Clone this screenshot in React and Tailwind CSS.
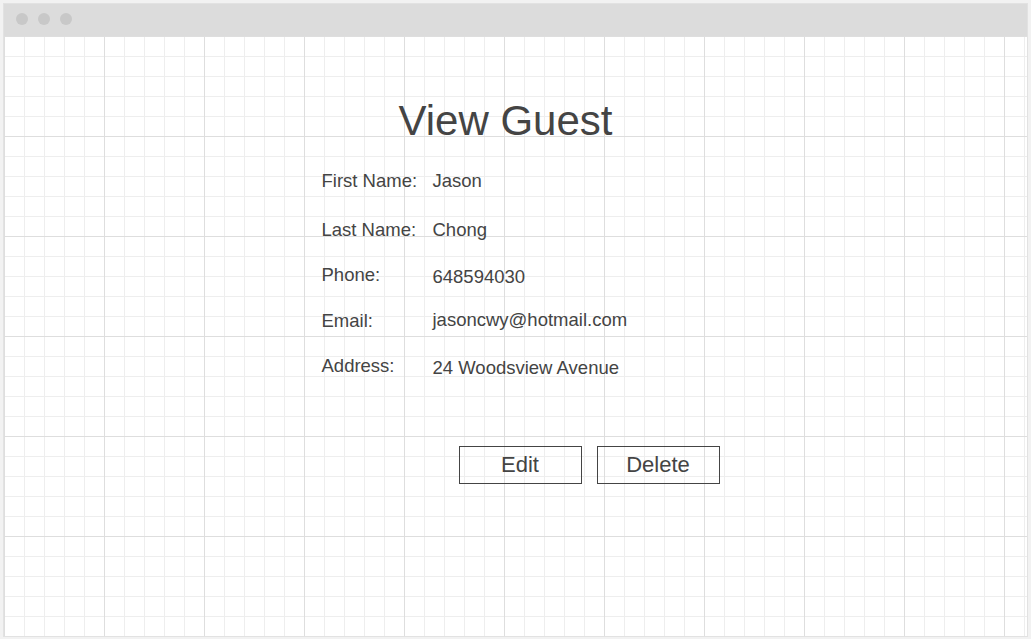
import React from 'react';

const guest = [
  { label: 'First Name:', value: 'Jason', mt: 'mt-[25px]', vt: 'mt-0' },
  { label: 'Last Name:', value: 'Chong', mt: 'mt-[28px]', vt: 'mt-0' },
  { label: 'Phone:', value: '648594030', mt: 'mt-[24px]', vt: 'mt-[2px]' },
  { label: 'Email:', value: 'jasoncwy@hotmail.com', mt: 'mt-[23px]', vt: '-mt-[1px]' },
  { label: 'Address:', value: '24 Woodsview Avenue', mt: 'mt-[24px]', vt: 'mt-[2px]' },
];

const App = () => {
  return (
    <div className="w-[1031px] h-[639px] bg-[#f2f2f2] pt-[3px] pl-[3px] font-['Liberation_Sans',Arial,sans-serif] text-[#444444]">
      <div className="w-[1025px] h-[634px] border border-[#e2e2e2] bg-white flex flex-col">
        <div className="h-[32px] bg-[#dcdcdc] flex items-start gap-[10px] pl-[12px] pt-[9px]">
          <span className="w-[12px] h-[12px] rounded-full bg-[#c8c8c8]"></span>
          <span className="w-[12px] h-[12px] rounded-full bg-[#c8c8c8]"></span>
          <span className="w-[12px] h-[12px] rounded-full bg-[#c8c8c8]"></span>
        </div>

        <div className="flex-1 bg-white bg-[linear-gradient(to_right,#dedede_1px,transparent_1px),linear-gradient(to_bottom,#dedede_1px,transparent_1px),linear-gradient(to_right,#eeeeee_1px,transparent_1px),linear-gradient(to_bottom,#eeeeee_1px,transparent_1px)] bg-[size:100px_100px,100px_100px,20px_20px,20px_20px]">
          <div className="w-[388px] mx-auto pt-[61px]">
            <h1 className="w-[368px] text-center text-[42px] leading-[48px] font-normal">View Guest</h1>

            {guest.map(row => (
              <div key={row.label} className={`flex items-start text-[18.5px] leading-[21px] ${row.mt}`}>
                <span className="w-[111px] shrink-0">{row.label}</span>
                <span className={`whitespace-nowrap ${row.vt}`}>{row.value}</span>
              </div>
            ))}

            <div className="flex gap-[15px] pl-[137px] mt-[68px]">
              <button className="w-[123px] h-[38px] shrink-0 border border-[#444444] bg-transparent text-[22px] leading-[24px] text-[#444444]">
                Edit
              </button>
              <button className="w-[123px] h-[38px] shrink-0 border border-[#444444] bg-transparent text-[22px] leading-[24px] text-[#444444]">
                Delete
              </button>
            </div>
          </div>
        </div>
      </div>
    </div>
  );
};

export default App;
